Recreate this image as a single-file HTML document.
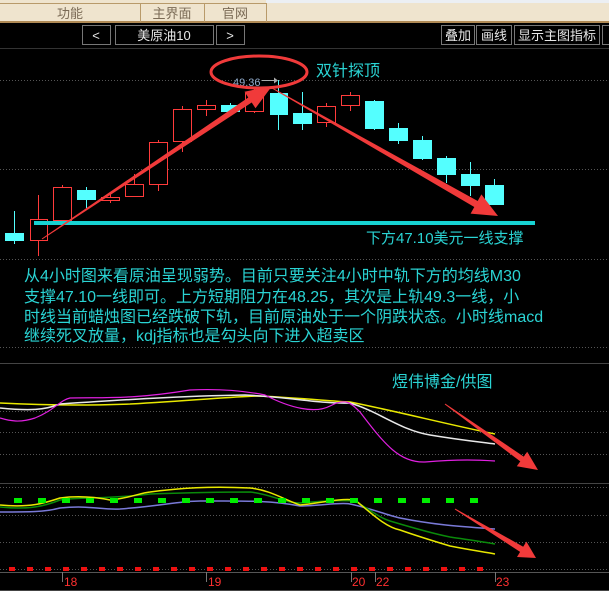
<!DOCTYPE html>
<html><head><meta charset="utf-8"><style>
html,body{margin:0;padding:0;background:#000;width:609px;height:591px;overflow:hidden}
svg{display:block}
text{font-family:"Liberation Sans","Noto Sans CJK SC",sans-serif}
</style></head><body>
<svg width="609" height="591" viewBox="0 0 609 591" xmlns="http://www.w3.org/2000/svg">
<rect width="609" height="591" fill="#000"/>
<rect x="0" y="0" width="609" height="22" fill="#efe4ce"/>
<rect x="266" y="0" width="343" height="3" fill="#eceff3"/>
<rect x="0" y="21" width="609" height="2" fill="#b08a55"/>
<line x1="140.5" y1="3" x2="140.5" y2="22" stroke="#b89a6a"/>
<line x1="204.5" y1="3" x2="204.5" y2="22" stroke="#b89a6a"/>
<line x1="266.5" y1="3" x2="266.5" y2="22" stroke="#b89a6a"/>
<line x1="0" y1="3.5" x2="266" y2="3.5" stroke="#b89a6a"/>
<text x="70" y="18" font-size="13" fill="#7a6a55" text-anchor="middle">功能</text>
<text x="172" y="18" font-size="13" fill="#7a6a55" text-anchor="middle">主界面</text>
<text x="235" y="18" font-size="13" fill="#7a6a55" text-anchor="middle">官网</text>
<g fill="none" stroke="#777" stroke-width="1">
<rect x="82.5" y="25.5" width="28" height="19"/>
<rect x="115.5" y="25.5" width="98" height="19"/>
<rect x="216.5" y="25.5" width="28" height="19"/>
<rect x="441.5" y="25.5" width="33" height="19"/>
<rect x="476.5" y="25.5" width="35" height="19"/>
<rect x="514.5" y="25.5" width="85" height="19"/>
<rect x="602.5" y="25.5" width="10" height="19"/>
</g>
<g font-size="13" fill="#e8e8e8" text-anchor="middle">
<text x="96" y="40">&lt;</text>
<text x="164" y="40">美原油10</text>
<text x="230" y="40">&gt;</text>
<text x="458" y="40">叠加</text>
<text x="494" y="40">画线</text>
<text x="557" y="40">显示主图指标</text>
</g>
<line x1="0" y1="48.5" x2="609" y2="48.5" stroke="#333"/>
<g stroke="#555" stroke-dasharray="1 2" stroke-width="1">
<line x1="0" y1="80.5" x2="609" y2="80.5"/>
<line x1="0" y1="169.5" x2="609" y2="169.5"/>
<line x1="0" y1="259.5" x2="609" y2="259.5"/>
<line x1="0" y1="347.5" x2="609" y2="347.5"/>
<line x1="0" y1="411.5" x2="609" y2="411.5"/>
<line x1="0" y1="432.5" x2="609" y2="432.5"/>
<line x1="0" y1="454.5" x2="609" y2="454.5"/>
<line x1="0" y1="487.5" x2="609" y2="487.5"/>
<line x1="0" y1="515.5" x2="609" y2="515.5"/>
<line x1="0" y1="542.5" x2="609" y2="542.5"/>
<line x1="0" y1="569.5" x2="609" y2="569.5"/>
</g>
<line x1="0" y1="363.5" x2="609" y2="363.5" stroke="#444"/>
<line x1="0" y1="483.5" x2="609" y2="483.5" stroke="#444"/>
<line x1="0" y1="572.5" x2="609" y2="572.5" stroke="#555"/>
<line x1="0" y1="590.5" x2="609" y2="590.5" stroke="#444"/>
<g stroke="#54ffff" stroke-width="1">
<line x1="14.5" y1="211" x2="14.5" y2="244"/>
<line x1="86.5" y1="187" x2="86.5" y2="208"/>
<line x1="230.5" y1="103" x2="230.5" y2="112"/>
<line x1="278.5" y1="80" x2="278.5" y2="130"/>
<line x1="302.5" y1="92" x2="302.5" y2="130"/>
<line x1="374.5" y1="100" x2="374.5" y2="130"/>
<line x1="398.5" y1="123" x2="398.5" y2="144"/>
<line x1="422.5" y1="136" x2="422.5" y2="160"/>
<line x1="446.5" y1="156" x2="446.5" y2="183"/>
<line x1="470.5" y1="162" x2="470.5" y2="196"/>
<line x1="494.5" y1="179" x2="494.5" y2="205"/>
</g>
<g fill="#54ffff">
<rect x="5" y="233" width="19" height="8"/>
<rect x="77" y="190" width="19" height="10"/>
<rect x="221" y="105" width="19" height="7"/>
<rect x="270" y="93" width="18" height="22"/>
<rect x="293" y="113" width="19" height="11"/>
<rect x="365" y="101" width="19" height="28"/>
<rect x="389" y="128" width="19" height="13"/>
<rect x="413" y="140" width="19" height="19"/>
<rect x="437" y="158" width="19" height="17"/>
<rect x="461" y="174" width="19" height="12"/>
<rect x="485" y="185" width="19" height="20"/>
</g>
<g stroke="#ff3b3b" stroke-width="1" fill="#000">
<line x1="38.5" y1="195" x2="38.5" y2="256"/>
<line x1="62.5" y1="185" x2="62.5" y2="188"/>
<line x1="110.5" y1="193" x2="110.5" y2="203"/>
<line x1="134.5" y1="174" x2="134.5" y2="184"/>
<line x1="158.5" y1="140" x2="158.5" y2="191"/>
<line x1="182.5" y1="106" x2="182.5" y2="152"/>
<line x1="206.5" y1="100" x2="206.5" y2="116"/>
<line x1="254.5" y1="88" x2="254.5" y2="113"/>
<line x1="326.5" y1="103" x2="326.5" y2="127"/>
<line x1="350.5" y1="92" x2="350.5" y2="111"/>
<rect x="30.5" y="219.5" width="17" height="21"/>
<rect x="53.5" y="187.5" width="18" height="33"/>
<rect x="101.5" y="197.5" width="18" height="3"/>
<rect x="125.5" y="184.5" width="18" height="12"/>
<rect x="149.5" y="142.5" width="18" height="42"/>
<rect x="173.5" y="109.5" width="18" height="32"/>
<rect x="197.5" y="105.5" width="18" height="4"/>
<rect x="245.5" y="93.5" width="18" height="18"/>
<rect x="317.5" y="106.5" width="18" height="16"/>
<rect x="341.5" y="95.5" width="18" height="10"/>
</g>
<rect x="34" y="221" width="501" height="4" fill="#17d2d2"/>
<text x="366" y="243" font-size="15" fill="#2ad4d4">下方47.10美元一线支撑</text>
<text x="316" y="76" font-size="16" fill="#2ad4d4">双针探顶</text>
<text x="233" y="86" font-size="11" fill="#8ea8c8">49.36</text>
<line x1="262" y1="80.5" x2="276" y2="80.5" stroke="#aaa"/>
<polygon points="274,77.5 278,80.5 274,83.5" fill="#aaa"/>
<ellipse cx="259" cy="72" rx="48" ry="16" fill="none" stroke="#f03a3a" stroke-width="3"/>
<polygon fill="#f03a3a" points="41.7,238.6 248.3,97.5 244.5,91.7 272,86 255.5,108.3 251.7,102.5 42.3,239.4"/>
<polygon fill="#f03a3a" points="271.75,88.43 474.3,207 470.6,213.6 498,216 481.4,194.4 477.7,201 272.25,87.57"/>
<g font-size="16" fill="#2ad4d4">
<text x="24" y="281">从4小时图来看原油呈现弱势。目前只要关注4小时中轨下方的均线M30</text>
<text x="24" y="302">支撑47.10一线即可。上方短期阻力在48.25，其次是上轨49.3一线，小</text>
<text x="24" y="322">时线当前蜡烛图已经跌破下轨，目前原油处于一个阴跌状态。小时线macd</text>
<text x="24" y="341">继续死叉放量，kdj指标也是勾头向下进入超卖区</text>
</g>
<text x="392" y="387" font-size="16" fill="#2ad4d4">煜伟博金/供图</text>
<path d="M0,403 C60,406 100,405 130,404 C200,400 240,396 260,396 C300,398 330,401 350,402 C400,412 450,425 495,434" fill="none" stroke="#e8e800" stroke-width="1.5"/>
<path d="M0,408 C30,411 45,410 60,404 C120,400 180,396 245,395 C290,397 320,404 350,403 C380,412 400,430 430,435 C460,440 480,442 495,444" fill="none" stroke="#e8e8e8" stroke-width="1.5"/>
<path d="M0,418 C10,421 20,423 35,418 C55,410 60,400 70,398 C100,397 130,400 190,390 C230,388 255,393 265,395 C290,408 315,414 330,406 C345,398 350,402 360,412 C385,445 400,463 425,462 C460,459 480,460 495,461" fill="none" stroke="#e020e0" stroke-width="1.2"/>
<polygon fill="#f03a3a" points="444.7,404.4 520.3,461.4 516.8,466.3 538,470 527.2,451.7 523.7,456.6 445.3,403.6"/>
<path d="M0,512 C30,512 45,512 60,508 C90,505 100,510 120,509 C160,506 180,501 200,501 C240,501 270,500 300,506 C320,506 340,502 350,504 C370,508 390,516 400,518 C440,526 470,527 495,529" fill="none" stroke="#7a7ad8" stroke-width="1.5"/>
<path d="M0,507 C30,510 45,506 60,500 C80,497 110,499 150,494 C180,493 220,492 250,492 C270,494 285,503 300,503 C320,501 340,500 355,501 C370,510 380,518 390,521 C420,530 440,535 450,537 C470,540 485,542 495,544" fill="none" stroke="#0a8a0a" stroke-width="1.5"/>
<path d="M0,505 C30,508 45,503 60,498 C75,496 90,496 110,500 C130,498 140,493 150,492 C180,488 210,486 250,488 C270,490 285,500 300,505 C320,503 340,498 355,500 C370,512 385,527 400,530 C420,537 440,543 450,546 C470,550 485,552 495,554" fill="none" stroke="#e8e800" stroke-width="1.5"/>
<g fill="#00ee00">
<rect x="14" y="498" width="8" height="5"/><rect x="38" y="498" width="8" height="5"/><rect x="62" y="498" width="8" height="5"/><rect x="86" y="498" width="8" height="5"/><rect x="110" y="498" width="8" height="5"/><rect x="134" y="498" width="8" height="5"/><rect x="158" y="498" width="8" height="5"/><rect x="182" y="498" width="8" height="5"/><rect x="206" y="498" width="8" height="5"/><rect x="230" y="498" width="8" height="5"/><rect x="254" y="498" width="8" height="5"/><rect x="278" y="498" width="8" height="5"/><rect x="302" y="498" width="8" height="5"/><rect x="326" y="498" width="8" height="5"/><rect x="350" y="498" width="8" height="5"/><rect x="374" y="498" width="8" height="5"/><rect x="398" y="498" width="8" height="5"/><rect x="422" y="498" width="8" height="5"/><rect x="446" y="498" width="8" height="5"/><rect x="470" y="498" width="8" height="5"/>
</g>
<polygon fill="#f03a3a" points="454.7,509.4 520.1,551.9 517,557 536,558 526.4,541.6 523.2,546.7 455.3,508.6"/>
<g fill="#ee1111">
<rect x="9" y="567" width="6" height="4"/><rect x="27" y="567" width="6" height="4"/><rect x="45" y="567" width="6" height="4"/><rect x="63" y="567" width="6" height="4"/><rect x="81" y="567" width="6" height="4"/><rect x="99" y="567" width="6" height="4"/><rect x="117" y="567" width="6" height="4"/><rect x="135" y="567" width="6" height="4"/><rect x="153" y="567" width="6" height="4"/><rect x="171" y="567" width="6" height="4"/><rect x="189" y="567" width="6" height="4"/><rect x="207" y="567" width="6" height="4"/><rect x="225" y="567" width="6" height="4"/><rect x="243" y="567" width="6" height="4"/><rect x="261" y="567" width="6" height="4"/><rect x="279" y="567" width="6" height="4"/><rect x="297" y="567" width="6" height="4"/><rect x="315" y="567" width="6" height="4"/><rect x="333" y="567" width="6" height="4"/><rect x="351" y="567" width="6" height="4"/><rect x="369" y="567" width="6" height="4"/><rect x="387" y="567" width="6" height="4"/><rect x="405" y="567" width="6" height="4"/><rect x="423" y="567" width="6" height="4"/><rect x="441" y="567" width="6" height="4"/><rect x="459" y="567" width="6" height="4"/><rect x="477" y="567" width="6" height="4"/>
</g>
<g stroke="#777"><line x1="62.5" y1="572" x2="62.5" y2="582"/><line x1="206.5" y1="572" x2="206.5" y2="582"/><line x1="351.5" y1="572" x2="351.5" y2="582"/><line x1="375.5" y1="572" x2="375.5" y2="582"/><line x1="495.5" y1="572" x2="495.5" y2="582"/></g>
<g font-size="12" fill="#ff3030">
<text x="64" y="586">18</text><text x="208" y="586">19</text><text x="352" y="586">20</text><text x="376" y="586">22</text><text x="496" y="586">23</text>
</g>
</svg>
</body></html>
